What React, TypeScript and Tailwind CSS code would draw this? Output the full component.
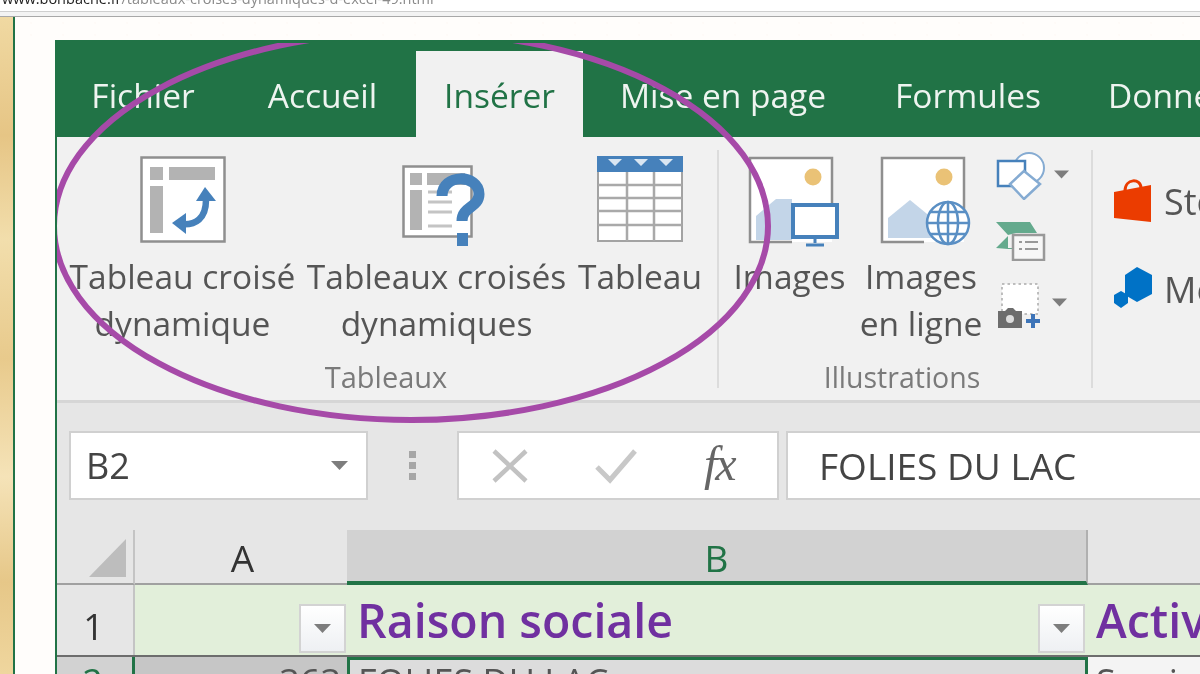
import React from "react";

const F = { fontFamily: '"Open Sans","Noto Sans",sans-serif' };

function PivotIcon() {
  return (
    <svg width="86" height="87" viewBox="0 0 86 87">
      <rect x="1.5" y="1.5" width="83" height="84" fill="#fff" stroke="#8f8f8f" strokeWidth="2.5" />
      <rect x="10" y="11" width="13" height="13" fill="#b3b3b3" />
      <rect x="29" y="11" width="46" height="13" fill="#b3b3b3" />
      <rect x="10" y="30" width="13" height="47" fill="#b3b3b3" />
      <path d="M40 68 C56 70 66 62 66 44" fill="none" stroke="#4681bb" strokeWidth="6.5" />
      <path d="M65 31 L76 45 L56 45 Z" fill="#4681bb" />
      <path d="M32 67 L46 57 L46 78 Z" fill="#4681bb" />
    </svg>
  );
}

function RecommendedIcon() {
  return (
    <svg width="86" height="84" viewBox="0 0 86 84">
      <rect x="1.5" y="1.5" width="68" height="70" fill="#fff" stroke="#8f8f8f" strokeWidth="2.5" />
      <rect x="8" y="8" width="12" height="12" fill="#b3b3b3" />
      <rect x="25" y="8" width="38" height="12" fill="#b3b3b3" />
      <rect x="8" y="25" width="12" height="40" fill="#b3b3b3" />
      <path d="M26 27H50M26 37H50M26 47H50M26 61H50" stroke="#c4c4c4" strokeWidth="3" />
      <path
        d="M42 35 C42 12 79 13 79 33 C79 47 62 45 62 60"
        fill="none"
        stroke="#4681bb"
        strokeWidth="11"
        transform="translate(-2,-4)"
      />
      <rect x="55" y="68" width="11" height="13" fill="#4681bb" />
    </svg>
  );
}

function TableIcon() {
  return (
    <svg width="86" height="86" viewBox="0 0 86 86">
      <rect x="1" y="1" width="84" height="84" fill="#fff" stroke="#a3a3a3" strokeWidth="2" />
      <rect x="0" y="0" width="86" height="16" fill="#4681bb" />
      <path d="M11 3H25L18 10ZM37 3H51L44 10ZM62 3H76L69 10Z" fill="#d9e6f2" />
      <path d="M1 29H85M1 42H85M1 55H85M1 69H85M30 16V85M57 16V85" stroke="#a9a9a9" strokeWidth="2.5" />
    </svg>
  );
}

function PictureFrame({ size }: { size: number }) {
  return (
    <g>
      <rect x="2" y="2" width="82" height="84" fill="#fff" />
      <path d="M44 86H2V2H84V54" fill="none" stroke="#8f8f8f" strokeWidth="2.5" />
      <circle cx={size} cy="21" r="8.5" fill="#eac276" />
    </g>
  );
}

function ImagesIcon() {
  return (
    <svg width="92" height="92" viewBox="0 0 92 92">
      <PictureFrame size={65} />
      <path d="M8 84V60L28 43L44 43V84Z" fill="#c3d5e8" />
      <rect x="45" y="49" width="44" height="32" fill="#fff" stroke="#4681bb" strokeWidth="4" />
      <path d="M67 82V87M58 89H76" stroke="#4681bb" strokeWidth="3" />
    </svg>
  );
}

function OnlineIcon() {
  return (
    <svg width="92" height="92" viewBox="0 0 92 92">
      <PictureFrame size={64} />
      <path d="M8 82V62L30 44L52 62V82Z" fill="#c3d5e8" />
      <circle cx="68" cy="67" r="21" fill="#fff" stroke="#5a8fc4" strokeWidth="2.5" />
      <ellipse cx="68" cy="67" rx="10" ry="21" fill="none" stroke="#5a8fc4" strokeWidth="2.5" />
      <path d="M68 46V88M47 67H89M50 56H86M50 78H86" stroke="#5a8fc4" strokeWidth="2.5" />
    </svg>
  );
}

function ShapesIcon() {
  return (
    <svg width="50" height="50" viewBox="0 0 50 50">
      <circle cx="33" cy="18" r="15" fill="#fff" stroke="#85abd2" strokeWidth="2" />
      <rect x="2" y="11" width="27" height="25" fill="#fff" stroke="#4681bb" strokeWidth="2.5" />
      <path d="M28 21L44 34L28 49L14 34Z" fill="#fff" stroke="#85abd2" strokeWidth="2.5" />
    </svg>
  );
}

function SmartArtIcon() {
  return (
    <svg width="50" height="40" viewBox="0 0 50 40">
      <path d="M0 1H34L41 12H20L12 14L0 1ZM0 27L12 15V27ZM12 27H18V28H0Z" fill="#64aa8d" />
      <rect x="17" y="14" width="31" height="25" fill="#f7f7f7" stroke="#999" strokeWidth="2.5" />
      <path d="M23 21H26M29 21H42M23 28H26M29 28H42" stroke="#999" strokeWidth="2" />
    </svg>
  );
}

function ScreenshotIcon() {
  return (
    <svg width="48" height="46" viewBox="0 0 48 46">
      <rect x="6" y="1" width="36" height="30" fill="#fff" stroke="#aaa" strokeWidth="1.5" strokeDasharray="2.5 3" />
      <path d="M2 28H9L12 25H17L20 28H26V45H2Z" fill="#6d6d6d" />
      <circle cx="14" cy="36" r="4" fill="#ddd" />
      <path d="M37 31V45M30 38H44" stroke="#3d74b8" strokeWidth="4" />
    </svg>
  );
}

function Caret({ cls }: { cls?: string }) {
  return (
    <svg width="17" height="9" viewBox="0 0 17 9" className={cls}>
      <path d="M0 0H17L8.5 9Z" fill="#7d7d7d" />
    </svg>
  );
}

function FilterButton() {
  return (
    <div className="w-[47px] h-[49px] flex items-center justify-center border-2 border-[#d3d3d3] bg-gradient-to-b from-white to-[#eef0f3]">
      <Caret />
    </div>
  );
}

function RibbonButton({
  width,
  icon,
  lines,
}: {
  width: string;
  icon: React.ReactNode;
  lines: string[];
}) {
  return (
    <div className={`${width} flex flex-col items-center shrink-0`}>
      <div className="h-[96px] flex items-start justify-center">{icon}</div>
      {lines.map((l) => (
        <div key={l} className="h-[47px] leading-[48px] text-[33.5px] text-[#555] whitespace-nowrap">
          {l}
        </div>
      ))}
    </div>
  );
}

export default function App() {
  return (
    <div className="w-[1200px] h-[674px] overflow-hidden flex flex-col bg-white blur-[0.6px]" style={F}>
      <div className="h-[11px] overflow-hidden shrink-0 pl-[2px]">
        <div className="-mt-[10px] text-[14.5px] leading-[18px] text-[#8a8a8a] whitespace-nowrap">
          <span className="text-[#222]">www.bonbache.fr</span>/tableaux-croises-dynamiques-d-excel-49.html
        </div>
      </div>
      <div className="h-[6px] shrink-0 border-t border-b border-t-[#cfcfcf] border-b-[#a8a8a8] bg-[#f3f3f3]" />
      <div className="flex flex-1 min-h-0">
        <div className="w-[13px] shrink-0 bg-[#edd8a3] bg-[linear-gradient(180deg,#f0d9a2_0%,#e6c585_18%,#f2deac_34%,#e8ca8c_52%,#f5e3b8_70%,#e6c788_86%,#efd69e_100%)]" />
        <div className="w-[2px] shrink-0 bg-[#217346]" />
        <div className="flex-1 min-w-0 flex flex-col bg-[#fffdfb]">
          <div className="h-[23px] shrink-0 bg-[radial-gradient(#fdeee2_1px,transparent_1.5px)] bg-[length:32px_12px]" />
          <div className="flex-1 min-h-0 ml-10 border-l-2 border-[#217346] relative overflow-hidden flex flex-col bg-[#e6e6e6]">
            {/* tabs */}
            <div className="h-[97px] shrink-0 bg-[#217346] flex items-end text-[33.5px] text-[#eef4f0]">
              <div className="w-[172px] h-[86px] flex items-center justify-center shrink-0 pt-[2px]">Fichier</div>
              <div className="w-[187px] h-[86px] flex items-center justify-center shrink-0 pt-[2px]">Accueil</div>
              <div className="w-[167px] h-[86px] flex items-center justify-center shrink-0 pt-[2px] bg-[#f1f1f1] text-[#217346]">
                Insérer
              </div>
              <div className="w-[280px] h-[86px] flex items-center justify-center shrink-0 pt-[2px]">Mise en page</div>
              <div className="w-[210px] h-[86px] flex items-center justify-center shrink-0 pt-[2px]">Formules</div>
              <div className="h-[86px] flex items-center pl-[35px] shrink-0 pt-[2px]">Données</div>
            </div>
            {/* ribbon */}
            <div className="h-[266px] shrink-0 bg-[#f1f1f1] border-b-[3px] border-[#d6d6d6] flex overflow-hidden pt-[13px] items-start">
              <div className="w-[662px] h-[238px] shrink-0 border-r-2 border-[#dcdcdc] pt-[6px] flex flex-col">
                <div className="h-[208px] flex pl-[13px] gap-[13px]">
                  <RibbonButton width="w-[225px]" icon={<PivotIcon />} lines={["Tableau croisé", "dynamique"]} />
                  <RibbonButton
                    width="w-[257px]"
                    icon={
                      <div className="mt-[9px] ml-[16px]">
                        <RecommendedIcon />
                      </div>
                    }
                    lines={["Tableaux croisés", "dynamiques"]}
                  />
                  <RibbonButton width="w-[124px]" icon={<TableIcon />} lines={["Tableau"]} />
                </div>
                <div className="h-[24px] leading-[26px] text-center text-[29px] text-[#7a7a7a] pr-[2px]">Tableaux</div>
              </div>
              <div className="w-[374px] h-[238px] shrink-0 border-r-2 border-[#dcdcdc] pt-[6px] flex flex-col">
                <div className="h-[208px] flex pl-[13px]">
                  <RibbonButton
                    width="w-[115px]"
                    icon={
                      <div className="ml-[8px]">
                        <ImagesIcon />
                      </div>
                    }
                    lines={["Images"]}
                  />
                  <RibbonButton
                    width="w-[124px] ml-[12px]"
                    icon={
                      <div className="ml-[10px]">
                        <OnlineIcon />
                      </div>
                    }
                    lines={["Images", "en ligne"]}
                  />
                  <div className="ml-[13px] flex flex-col">
                    <div className="h-[69px] -mt-[6px] flex items-start gap-[8px]">
                      <ShapesIcon />
                      <Caret cls="mt-[20px] w-[15px]" />
                    </div>
                    <div className="h-[64px] flex items-start pt-[2px]">
                      <SmartArtIcon />
                    </div>
                    <div className="flex items-center gap-[8px]">
                      <ScreenshotIcon />
                      <Caret cls="-mt-[8px] w-[15px]" />
                    </div>
                  </div>
                </div>
                <div className="h-[24px] leading-[26px] text-center text-[28.5px] text-[#7a7a7a] pr-[6px]">
                  Illustrations
                </div>
              </div>
              <div className="pl-[20px] pt-[28px] flex flex-col gap-[41px] text-[36px] text-[#555] whitespace-nowrap">
                <div className="h-[48px] flex items-center gap-[11px]">
                  <svg width="40" height="48" viewBox="0 0 40 48">
                    <path d="M12 13 C12 0 28 0 28 10" fill="none" stroke="#eb3c00" strokeWidth="3" />
                    <path d="M1 14L38 7V44L1 40Z" fill="#eb3c00" />
                  </svg>
                  <span>Store</span>
                </div>
                <div className="h-[42px] flex items-center gap-[11px]">
                  <svg width="40" height="42" viewBox="0 0 40 42">
                    <path d="M24 0L39 8V27L24 35L12 28V8Z" fill="#0072c6" />
                    <path d="M8 24L15 28V36L8 41L1 36V28Z" fill="#0072c6" />
                  </svg>
                  <span className="pt-[3px]">Mes compléments</span>
                </div>
              </div>
            </div>
            {/* formula bar */}
            <div className="h-[127px] shrink-0 pt-[28px] flex items-start pl-[12px]">
              <div className="w-[299px] h-[69px] shrink-0 bg-white border-2 border-[#d0d0d0] flex items-center justify-between pl-[15px] pr-[18px] text-[36px] text-[#444]">
                <span>B2</span>
                <Caret />
              </div>
              <div className="w-[89px] h-[69px] shrink-0 flex flex-col items-center justify-center gap-[4px]">
                <div className="w-[7px] h-[7px] bg-[#a6a6a6]" />
                <div className="w-[7px] h-[7px] bg-[#a6a6a6]" />
                <div className="w-[7px] h-[7px] bg-[#a6a6a6]" />
              </div>
              <div className="w-[322px] h-[69px] shrink-0 bg-white border-2 border-[#d0d0d0] flex items-center pl-[32px]">
                <svg width="38" height="34" viewBox="0 0 38 34">
                  <path d="M3 2L35 32M35 2L3 32" stroke="#c2c2c2" strokeWidth="4.5" />
                </svg>
                <svg width="44" height="36" viewBox="0 0 44 36" className="ml-[65px]">
                  <path d="M3 19L16 32L41 3" fill="none" stroke="#c8c8c8" strokeWidth="5" />
                </svg>
                <span
                  className="ml-[66px] text-[48px] leading-[60px] italic text-[#666] -mt-[4px] tracking-[-2px]"
                  style={{ fontFamily: '"Liberation Serif",serif' }}
                >
                  fx
                </span>
              </div>
              <div className="ml-[7px] flex-1 h-[69px] bg-white border-2 border-r-0 border-[#d0d0d0] flex items-center pl-[31px] text-[37px] text-[#444] whitespace-nowrap">
                FOLIES DU LAC
              </div>
            </div>
            {/* column header */}
            <div className="h-[55px] shrink-0 flex text-[37px]">
              <div className="w-[78px] shrink-0 border-r-2 border-[#c4c4c4] border-b-2 border-b-[#a0a0a0] pl-[32px] pt-[9px]">
                <svg width="38" height="38" viewBox="0 0 38 38">
                  <path d="M37 0V38H0Z" fill="#bdbdbd" />
                </svg>
              </div>
              <div className="w-[212px] shrink-0 flex items-center justify-center border-b-2 border-[#a0a0a0] text-[#333] pt-[2px] pl-[3px]">
                A
              </div>
              <div className="w-[741px] shrink-0 flex items-center justify-center bg-[#d2d2d2] border-b-[4px] border-[#217346] border-r-2 border-r-[#b0b0b0] text-[#217346] pt-[4px]">
                B
              </div>
              <div className="flex-1 border-b-2 border-[#a0a0a0]" />
            </div>
            {/* row 1 */}
            <div className="h-[70px] shrink-0 flex">
              <div className="w-[78px] shrink-0 border-r-2 border-[#c4c4c4] flex items-center justify-center pr-[3px] pt-[13px] text-[36px] text-[#333]">
                1
              </div>
              <div className="w-[212px] shrink-0 bg-[#e2efda] flex items-end justify-end pr-[1px] pb-[2px]">
                <FilterButton />
              </div>
              <div className="w-[741px] shrink-0 bg-[#e2efda] flex items-end justify-between pl-[10px] pr-[3px] pb-[2px]">
                <span className="text-[46.5px] leading-[66px] font-semibold text-[#7030a0] whitespace-nowrap">
                  Raison sociale
                </span>
                <FilterButton />
              </div>
              <div className="flex-1 bg-[#e2efda] pl-[8px] flex items-end pb-[2px]">
                <span className="text-[46.5px] leading-[66px] font-semibold text-[#7030a0] whitespace-nowrap">
                  Activité
                </span>
              </div>
            </div>
            {/* row 2 */}
            <div className="flex-1 flex border-t-[2px] border-[#6d6d6d] text-[36px] leading-[36px] text-[#555]">
              <div className="w-[75px] shrink-0 bg-[#d2d2d2] flex justify-center pr-[4px] pt-[7px] text-[#217346]">
                2
              </div>
              <div className="w-[215px] shrink-0 bg-[#c6c6c6] border-l-[3px] border-[#217346] text-right pr-[6px] pt-[7px]">
                363
              </div>
              <div className="w-[741px] shrink-0 bg-[#dcdcdc] border-x-[3px] border-t-[3px] border-[#217346] pl-[8px] pt-[4px] whitespace-nowrap">
                FOLIES DU LAC
              </div>
              <div className="flex-1 bg-[#f4f4f4] pl-[8px] pt-[7px]">Services</div>
            </div>
            {/* hand-drawn ellipse */}
            <svg
              className="absolute left-0 top-0 pointer-events-none"
              width="1145"
              height="634"
              viewBox="0 0 1145 634"
            >
              <defs>
                <clipPath id="clip-top">
                  <rect x="0" y="3" width="1140" height="630" />
                </clipPath>
              </defs>
              <ellipse cx="354" cy="186" rx="357" ry="194" fill="none" stroke="#a64aa8" strokeWidth="6" clipPath="url(#clip-top)" />
            </svg>
          </div>
        </div>
      </div>
    </div>
  );
}
